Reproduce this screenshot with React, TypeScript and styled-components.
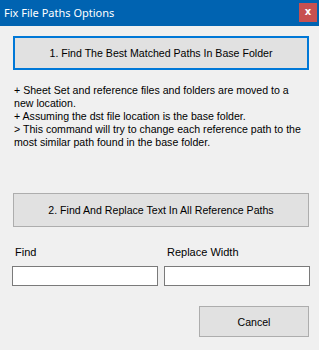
import { FC } from 'react';
import { createGlobalStyle, styled } from 'styled-components';

const GlobalStyle = createGlobalStyle`
  html, body {
    margin: 0;
    padding: 0;
    background: #f0f0f0;
  }
  * {
    box-sizing: border-box;
  }
`;

const infoLines = [
  '+ Sheet Set and reference files and folders are moved to a',
  'new location.',
  '+ Assuming the dst file location is the base folder.',
  '> This command will try to change each reference path to the',
  'most similar path found in the base folder.',
];

const App: FC = () => {
  return (
    <>
      <GlobalStyle />
      <S.Window>
        <S.TitleBar>
          <S.Title>Fix File Paths Options</S.Title>
          <S.CloseButton>x</S.CloseButton>
        </S.TitleBar>
        <S.Content>
          <S.ActionButton $focused>1. Find The Best Matched Paths In Base Folder</S.ActionButton>
          <S.Info>
            {infoLines.map(line => (
              <S.InfoLine key={line}>{line}</S.InfoLine>
            ))}
          </S.Info>
          <S.ActionButton $focused={false} $gap={44}>
            2. Find And Replace Text In All Reference Paths
          </S.ActionButton>
          <S.FieldRow>
            <S.Field>
              <S.Label>Find</S.Label>
              <S.TextBox />
            </S.Field>
            <S.Field>
              <S.Label>Replace Width</S.Label>
              <S.TextBox />
            </S.Field>
          </S.FieldRow>
          <S.CancelButton>Cancel</S.CancelButton>
        </S.Content>
      </S.Window>
    </>
  );
};

const S = {
  Window: styled.div`
    display: flex;
    flex-direction: column;
    width: 319px;
    height: 350px;
    background: #f0f0f0;
    font-family: 'Liberation Sans', Arial, sans-serif;
    font-size: 10.6px;
    color: #000;
    overflow: hidden;
  `,

  TitleBar: styled.div`
    display: flex;
    align-items: flex-start;
    justify-content: space-between;
    height: 26px;
    padding: 3px 2px 0 4px;
    background: #0063b1;
  `,

  Title: styled.span`
    color: #fff;
    font-family: 'Noto Sans', 'Open Sans', sans-serif;
    font-size: 11px;
    line-height: 20px;
  `,

  CloseButton: styled.div`
    display: flex;
    align-items: center;
    justify-content: center;
    width: 18px;
    height: 19px;
    background: #c75050;
    color: #fff;
    font-family: 'DejaVu Sans', sans-serif;
    font-weight: bold;
    font-size: 10px;
    line-height: 1;
    padding-bottom: 2px;
  `,

  Content: styled.div`
    display: flex;
    flex-direction: column;
    width: 296px;
    margin-left: 13px;
  `,

  ActionButton: styled.div<{ $focused: boolean; $gap?: number }>`
    display: flex;
    align-items: center;
    justify-content: center;
    height: 34px;
    margin-top: ${({ $gap }) => $gap ?? 10}px;
    background: #e1e1e1;
    border: ${({ $focused }) => ($focused ? '2px solid #0078d7' : '1px solid #adadad')};
  `,

  Info: styled.div`
    display: flex;
    flex-direction: column;
    margin-top: 14px;
    padding-left: 1px;
  `,

  InfoLine: styled.div`
    line-height: 13px;
    white-space: nowrap;
  `,

  FieldRow: styled.div`
    display: flex;
    gap: 6px;
    margin-top: 19px;
    margin-left: -1px;
  `,

  Field: styled.div`
    display: flex;
    flex-direction: column;
    gap: 7px;
  `,

  Label: styled.div`
    font-size: 11px;
    line-height: 13px;
    padding-left: 3px;
  `,

  TextBox: styled.div`
    width: 146px;
    height: 20px;
    background: #fff;
    border: 1px solid #7a7a7a;
  `,

  CancelButton: styled.div`
    display: flex;
    align-items: center;
    justify-content: center;
    align-self: flex-end;
    width: 110px;
    height: 31px;
    margin-top: 20px;
    background: #e1e1e1;
    border: 1px solid #adadad;
  `,
};

export default App;
